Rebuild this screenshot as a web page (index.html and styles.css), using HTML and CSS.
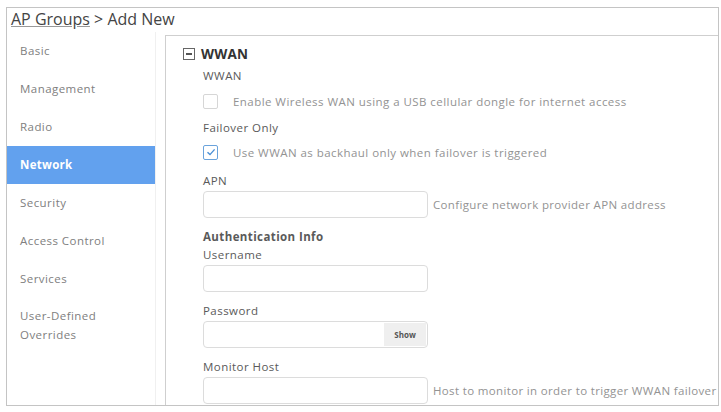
FILE: index.html
```html
<!DOCTYPE html>
<html lang="en">
<head>
    <meta charset="UTF-8">
    <meta name="viewport" content="width=device-width, initial-scale=1.0">
    <title>AP Groups - Add New</title>
    <link rel="stylesheet" href="styles.css">
</head>
<body>

    <div class="frame">
        <div class="header">
            <a class="crumb" href="#">AP Groups</a> &gt; Add New
        </div>

        <div class="body">
            <!-- Menu kiri -->
            <div class="sidebar">
                <div class="nav-item">Basic</div>
                <div class="nav-item">Management</div>
                <div class="nav-item">Radio</div>
                <div class="nav-item active">Network</div>
                <div class="nav-item">Security</div>
                <div class="nav-item">Access Control</div>
                <div class="nav-item">Services</div>
                <div class="nav-item multi">User-Defined<br>Overrides</div>
            </div>

            <!-- Panel WWAN -->
            <div class="panel">
                <div class="section-head">
                    <span class="toggle"></span>
                    <span class="section-title">WWAN</span>
                </div>

                <div class="form">
                    <div class="label first">WWAN</div>
                    <div class="check-row">
                        <span class="checkbox"></span>
                        <span class="check-text">Enable Wireless WAN using a USB cellular dongle for internet access</span>
                    </div>

                    <div class="label gap-lg">Failover Only</div>
                    <div class="check-row gap-sm">
                        <span class="checkbox checked">
                            <svg width="10" height="10" viewBox="0 0 10 10">
                                <path d="M1.5 5.2 L4 7.6 L8.6 2.4" fill="none" stroke="#4a8fd6" stroke-width="1.4"/>
                            </svg>
                        </span>
                        <span class="check-text">Use WWAN as backhaul only when failover is triggered</span>
                    </div>

                    <div class="label gap-apn">APN</div>
                    <div class="field-row">
                        <div class="input"></div>
                        <span class="help">Configure network provider APN address</span>
                    </div>

                    <div class="label bold gap-lg">Authentication Info</div>
                    <div class="label">Username</div>
                    <div class="field-row">
                        <div class="input"></div>
                    </div>

                    <div class="label gap-lg">Password</div>
                    <div class="field-row">
                        <div class="input">
                            <span class="show-btn">Show</span>
                        </div>
                    </div>

                    <div class="label gap-lg">Monitor Host</div>
                    <div class="field-row">
                        <div class="input"></div>
                        <span class="help">Host to monitor in order to trigger WWAN failover</span>
                    </div>
                </div>
            </div>
        </div>
    </div>

</body>
</html>
```

FILE: styles.css
```css
body {
    margin: 0;
    font-family: "Open Sans", Arial, sans-serif;
    background: #fff;
    color: #555;
}
.frame {
    margin: 7px 2px 0 6px;
    height: 397px;
    border: 1px solid #c4c4c4;
    display: flex;
    flex-direction: column;
    overflow: hidden;
}
.header {
    height: 24px;
    flex-shrink: 0;
    line-height: 22px;
    padding-left: 4px;
    font-size: 16px;
    color: #444;
}
.crumb {
    color: #444;
    text-decoration: underline;
    text-decoration-color: #999;
}
.body {
    flex: 1;
    display: flex;
    min-height: 0;
}
.sidebar {
    width: 148px;
    flex-shrink: 0;
    border-right: 1px solid #f0f0f0;
}
.nav-item {
    height: 38px;
    line-height: 38px;
    padding-left: 13px;
    font-size: 11.5px;
    letter-spacing: 0.45px;
    color: #808080;
}
.nav-item.active {
    background: #62a1ee;
    color: white;
    font-weight: bold;
    letter-spacing: 0.3px;
}
.nav-item.multi {
    line-height: 19px;
    padding-top: 8px;
}
.panel {
    flex: 1;
    margin: 3px 0 0 9px;
    border-left: 1px solid #cfcfcf;
    border-top: 1px solid #cfcfcf;
    padding: 11px 0 0 17px;
    white-space: nowrap;
}
.section-head {
    display: flex;
    align-items: center;
    height: 14px;
}
.toggle {
    width: 10px;
    height: 10px;
    border: 1px solid #666;
    position: relative;
    margin-right: 6px;
}
.toggle::after {
    content: "";
    position: absolute;
    left: 2px;
    right: 2px;
    top: 4px;
    height: 1.5px;
    background: #555;
}
.section-title {
    font-size: 13.5px;
    font-weight: bold;
    letter-spacing: 0.2px;
    color: #333;
}
.form {
    padding-left: 20px;
}
.label {
    height: 16px;
    line-height: 16px;
    font-size: 11.5px;
    letter-spacing: 0.45px;
    color: #5a5a5a;
    margin-top: 2px;
}
.label.first {
    margin-top: 7px;
}
.label.bold {
    font-weight: bold;
    letter-spacing: 0.4px;
}
.gap-lg {
    margin-top: 11px;
}
.gap-apn {
    margin-top: 13px;
}
.check-row {
    display: flex;
    align-items: center;
    height: 16px;
    margin-top: 9px;
}
.check-row.gap-sm {
    margin-top: 8px;
}
.checkbox {
    width: 13px;
    height: 13px;
    border: 1px solid #d6d6d6;
    border-radius: 2px;
    margin-right: 15px;
    display: flex;
    align-items: center;
    justify-content: center;
}
.checkbox.checked {
    border-color: #6aa3dc;
}
.check-text {
    font-size: 11.5px;
    letter-spacing: 0.45px;
    color: #939393;
}
.field-row {
    display: flex;
    align-items: center;
    margin-top: 2px;
}
.input {
    width: 223px;
    height: 25px;
    flex-shrink: 0;
    border: 1px solid #dcdcdc;
    border-radius: 4px;
    position: relative;
}
.show-btn {
    position: absolute;
    right: 1px;
    top: 1px;
    bottom: 1px;
    width: 42px;
    background: #efefef;
    font-size: 8px;
    font-weight: bold;
    color: #555;
    display: flex;
    align-items: center;
    justify-content: center;
}
.help {
    margin-left: 5px;
    font-size: 11.5px;
    letter-spacing: 0.35px;
    color: #939393;
}
```
